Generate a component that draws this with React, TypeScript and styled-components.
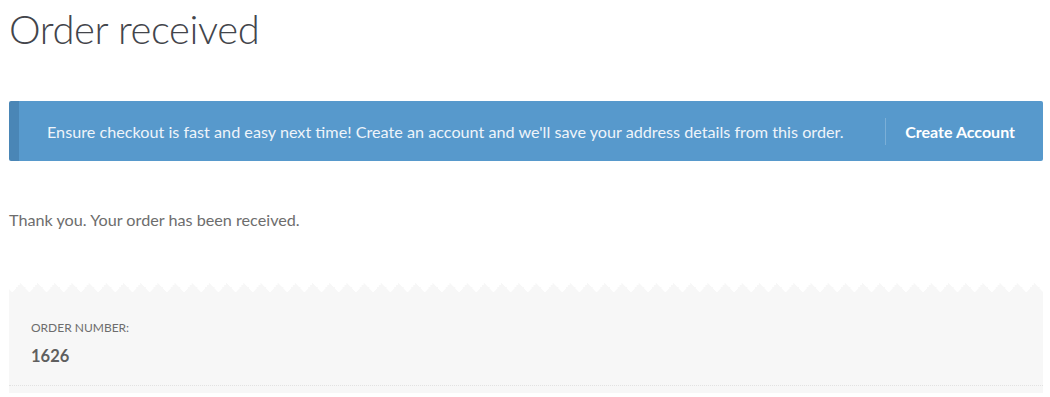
import React from 'react'
import styled, { createGlobalStyle } from 'styled-components'

const GlobalStyle = createGlobalStyle`
  body {
    margin: 0;
    background: #ffffff;
    font-family: Lato, 'Liberation Sans', sans-serif;
    color: #6d6d6d;
  }
`

const Page = styled.div`
  padding: 0 7px 0 9px;
`

const Title = styled.h1`
  margin: 0;
  padding-top: 2px;
  font-size: 40px;
  line-height: 54px;
  font-weight: 300;
  color: #43454b;
  letter-spacing: -0.4px;
`

const Notice = styled.div`
  display: flex;
  align-items: center;
  margin-top: 45px;
  height: 60px;
  background: #5799cc;
  border-left: 10px solid #4a86b6;
  border-radius: 2px;
  padding: 0 28px;
`

const NoticeText = styled.p`
  flex: 1;
  margin: 0;
  font-size: 16.2px;
  color: #eef4fa;
`

const NoticeButton = styled.a`
  display: flex;
  align-items: center;
  height: 27px;
  padding-left: 19px;
  border-left: 1px solid rgba(255, 255, 255, 0.22);
  font-size: 16px;
  font-weight: 700;
  color: #ffffff;
  text-decoration: none;
  cursor: pointer;
`

const Thanks = styled.p`
  margin: 47px 0 0;
  font-size: 16.2px;
  line-height: 24px;
`

const Details = styled.ul`
  position: relative;
  list-style: none;
  margin: 60px 0 0;
  padding: 27px 0 0;
  background: #f7f7f7;

  &::before {
    content: '';
    position: absolute;
    left: 0;
    right: 0;
    top: -8.6px;
    height: 8.6px;
    background: conic-gradient(from 135deg at 50% 0, #f7f7f7 90deg, transparent 0) 3.2px 0 / 17.2px 8.6px repeat-x;
  }
`

const DetailItem = styled.li`
  padding: 0 22px 18px;
  border-bottom: 1px dotted #e2e2e2;
`

const DetailLabel = styled.span`
  display: block;
  font-size: 12px;
  text-transform: uppercase;
  line-height: 18px;
`

const DetailValue = styled.strong`
  display: block;
  margin-top: 8px;
  font-size: 16.5px;
  line-height: 22px;
  font-weight: 700;
  color: #5f5f5f;
`

const Spacer = styled.li`
  height: 7px;
`

export default function App() {
  return (
    <>
      <GlobalStyle />
      <Page>
        <Title>Order received</Title>
        <Notice>
          <NoticeText>
            Ensure checkout is fast and easy next time! Create an account and we'll save your address details from this order.
          </NoticeText>
          <NoticeButton>Create Account</NoticeButton>
        </Notice>
        <Thanks>Thank you. Your order has been received.</Thanks>
        <Details>
          <DetailItem>
            <DetailLabel>Order number:</DetailLabel>
            <DetailValue>1626</DetailValue>
          </DetailItem>
          <Spacer />
        </Details>
      </Page>
    </>
  )
}
